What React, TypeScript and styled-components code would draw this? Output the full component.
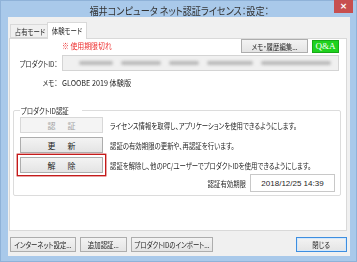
import * as React from "react";
import styled, { createGlobalStyle } from "styled-components";

const GlobalStyle = createGlobalStyle`
	html, body {
		margin: 0;
		padding: 0;
		background: #a9c9ea;
	}
	body {
		font-family: "Noto Sans CJK JP", "Liberation Sans", sans-serif;
		font-feature-settings: "palt";
		color: #1e1e1e;
	}
`;

// Meiryo UI is much narrower than Noto, so text gets squeezed horizontally
const Squeeze = styled.span<{ $s?: number; $o?: string }>`
	display: inline-block;
	white-space: nowrap;
	transform: scaleX(${(p) => p.$s ?? 0.8});
	transform-origin: ${(p) => p.$o ?? "left"} center;
`;

const Frame = styled.div`
	width: 357px;
	height: 262px;
	box-sizing: border-box;
	background: #a9c9ea;
	border: 1px solid #8fb2d8;
	display: flex;
	flex-direction: column;
	padding: 0 6px 5px 7px;
`;

const TitleBar = styled.div`
	height: 16px;
	display: grid;
	grid-template-columns: 19px 1fr 19px;
	align-items: start;
`;

const Title = styled.div`
	grid-column: 2;
	text-align: center;
	font-size: 10.5px;
	line-height: 19px;
	color: #333;
`;

const CloseButton = styled.div`
	width: 19px;
	height: 13px;
	margin-top: -1px;
	margin-left: 3px;
	background: #c74f4f;
	color: #fff;
	font-size: 9px;
	font-weight: bold;
	line-height: 13px;
	text-align: center;
	font-family: "DejaVu Sans", sans-serif;
`;

const Body = styled.div`
	height: 240px;
	background: #f0f0f0;
	display: flex;
	flex-direction: column;
	padding: 5px 3px 4px 1px;
	box-sizing: border-box;
`;

const TabRow = styled.div`
	display: flex;
	align-items: flex-end;
	height: 16px;
	padding-left: 1px;
	position: relative;
	z-index: 1;
`;

const Tab = styled.div<{ $active?: boolean; $w: number }>`
	font-size: 8px;
	box-sizing: border-box;
	width: ${(p) => p.$w}px;
	height: ${(p) => (p.$active ? "17px" : "14px")};
	margin-bottom: ${(p) => (p.$active ? "-1px" : "0")};
	margin-left: ${(p) => (p.$active ? "-1px" : "0")};
	padding-top: ${(p) => (p.$active ? "2px" : "1px")};
	line-height: 11px;
	text-align: center;
	background: ${(p) => (p.$active ? "#fff" : "#f0f0f0")};
	border: 1px solid #d9d9d9;
	border-bottom: ${(p) => (p.$active ? "none" : "1px solid #d9d9d9")};
`;

const Panel = styled.div`
	height: 193px;
	box-sizing: border-box;
	background: #fff;
	border: 1px solid #d9d9d9;
	display: flex;
	flex-direction: column;
	padding: 0 7px 0 0;
`;

const TopRow = styled.div`
	display: flex;
	align-items: flex-start;
	height: 14px;
`;

const Expired = styled.div`
	color: #ee2a2a;
	font-size: 8px;
	line-height: 14px;
	margin-left: 52px;
	flex: 1;
`;

const Button = styled.div<{ $disabled?: boolean; $focus?: boolean; $w: number; $h?: number }>`
	box-sizing: border-box;
	flex: none;
	width: ${(p) => p.$w}px;
	height: ${(p) => p.$h ?? 15}px;
	display: flex;
	align-items: center;
	justify-content: center;
	font-size: 8px;
	color: ${(p) => (p.$disabled ? "#a3a3a3" : "#1e1e1e")};
	background: ${(p) => (p.$disabled ? "#f4f4f4" : "linear-gradient(#f3f3f3, #e4e4e4)")};
	border: 1px solid ${(p) => (p.$focus ? "#3d8ee0" : p.$disabled ? "#d8d8d8" : "#adadad")};
	box-shadow: ${(p) => (p.$focus ? "inset 0 0 0 1px #d4e8fb" : "none")};
	white-space: nowrap;
`;

const SpacedLabel = styled.span`
	letter-spacing: 2px;
	margin-left: 2px;
`;

const QaButton = styled.div`
	box-sizing: border-box;
	width: 27px;
	height: 13px;
	margin: 1px 0 0 4px;
	background: #1fd21f;
	border: 1px solid #17a817;
	color: #fff;
	font-family: "Liberation Serif", serif;
	font-size: 9px;
	line-height: 11px;
	text-align: center;
`;

const FieldRow = styled.div`
	display: flex;
	align-items: center;
	margin-top: 2px;
`;

const Label = styled.div`
	width: 48px;
	text-align: right;
	font-size: 8px;
	white-space: nowrap;
`;

const IdBox = styled.div`
	box-sizing: border-box;
	width: 277px;
	height: 16px;
	margin-left: 4px;
	background: #f0f0f0;
	border: 1px solid #d4d4d4;
	display: flex;
	align-items: center;
	gap: 8px;
	padding-left: 16px;
	overflow: hidden;
`;

const Blur = styled.div<{ $w: number }>`
	width: ${(p) => p.$w}px;
	height: 4px;
	background: #b8b8b8;
	border-radius: 2px;
	filter: blur(1.4px);
`;

const MemoRow = styled.div`
	display: flex;
	align-items: center;
	height: 11px;
	margin-top: 6px;
	font-size: 8px;
`;

const MemoValue = styled.div`
	margin-left: 4px;
`;

const Group = styled.fieldset`
	margin: 18px 0 0 3px;
	padding: 0 0 0 3px;
	min-width: 0;
	width: 328px;
	height: 90px;
	box-sizing: border-box;
	border: 1px solid #dcdcdc;
	border-radius: 2px;
	display: flex;
	flex-direction: column;
`;

const Legend = styled.legend`
	font-size: 8px;
	padding: 0 1px;
	margin-left: 3px;
	line-height: 9px;
`;

const ActionRow = styled.div`
	display: flex;
	align-items: center;
	height: 20px;
	flex: none;
`;

const ButtonSlot = styled.div<{ $marked?: boolean }>`
	box-sizing: border-box;
	flex: none;
	width: 89px;
	height: 22px;
	padding: 2px;
	display: flex;
	align-items: center;
	border: 1px solid ${(p) => (p.$marked ? "#c41a1a" : "transparent")};
	box-shadow: ${(p) => (p.$marked ? "0 0 0 0.4px #c41a1a" : "none")};
`;

const Desc = styled.div`
	font-size: 8px;
	margin-left: 4px;
	white-space: nowrap;
`;

const ExpiryRow = styled.div`
	display: flex;
	align-items: center;
	justify-content: flex-end;
	padding-right: 5px;
	margin-top: -1px;
	font-size: 8px;
`;

const DateBox = styled.div`
	box-sizing: border-box;
	width: 85px;
	height: 18px;
	margin-left: 4px;
	border: 1px solid #c8c8c8;
	background: #fff;
	display: flex;
	align-items: center;
	justify-content: center;
	font-family: "Liberation Sans", sans-serif;
	font-size: 8px;
`;

const Footer = styled.div`
	display: flex;
	align-items: center;
	margin-top: 6px;
	padding-left: 1px;
`;

const FooterButtons = styled.div`
	display: flex;
	gap: 4px;
	flex: 1;
`;

const actions = [
	{ label: "認　証", desc: "ライセンス情報を取得し、アプリケーションを使用できるようにします。", disabled: true },
	{ label: "更　新", desc: "認証の有効期限の更新や、再認証を行います。" },
	{ label: "解　除", desc: "認証を解除し、他のPC/ユーザーでプロダクトIDを使用できるようにします。", marked: true },
];

export default function App() {
	return (
		<>
			<GlobalStyle />
			<Frame>
				<TitleBar>
					<Title>
						<Squeeze $s={0.87} $o="center">福井コンピュータ ネット認証ライセンス：設定：</Squeeze>
					</Title>
					<CloseButton>×</CloseButton>
				</TitleBar>
				<Body>
					<TabRow>
						<Tab $w={38}>
							<Squeeze $o="center">占有モード</Squeeze>
						</Tab>
						<Tab $w={40} $active>
							<Squeeze $o="center">体験モード</Squeeze>
						</Tab>
					</TabRow>
					<Panel>
						<TopRow>
							<Expired>
								<Squeeze $s={0.86}>※ 使用期限切れ</Squeeze>
							</Expired>
							<Button $w={67} $h={14}>
								<Squeeze $o="center">メモ・履歴編集...</Squeeze>
							</Button>
							<QaButton>Q&amp;A</QaButton>
						</TopRow>
						<FieldRow>
							<Label>
								<Squeeze $o="right">プロダクトID：</Squeeze>
							</Label>
							<IdBox>
								<Blur $w={34} />
								<Blur $w={40} />
								<Blur $w={30} />
								<Blur $w={46} />
								<Blur $w={70} />
							</IdBox>
						</FieldRow>
						<MemoRow>
							<Label>
								<Squeeze $o="right">メモ：</Squeeze>
							</Label>
							<MemoValue>
								<Squeeze $s={0.9}>GLOOBE 2019 体験版</Squeeze>
							</MemoValue>
						</MemoRow>
						<Group>
							<Legend>
								<Squeeze>プロダクトID認証</Squeeze>
							</Legend>
							{actions.map((a, i) => (
								<ActionRow key={i}>
									<ButtonSlot $marked={a.marked}>
										<Button $w={83} $h={16} $disabled={a.disabled}>
											<SpacedLabel>{a.label}</SpacedLabel>
										</Button>
									</ButtonSlot>
									<Desc>
										<Squeeze>{a.desc}</Squeeze>
									</Desc>
								</ActionRow>
							))}
							<ExpiryRow>
								<Squeeze $o="right">認証有効期限</Squeeze>
								<DateBox>2018/12/25 14:39</DateBox>
							</ExpiryRow>
						</Group>
					</Panel>
					<Footer>
						<FooterButtons>
							<Button $w={66}>
								<Squeeze $o="center">インターネット設定...</Squeeze>
							</Button>
							<Button $w={47}>
								<Squeeze $o="center">追加認証...</Squeeze>
							</Button>
							<Button $w={82}>
								<Squeeze $o="center">プロダクトIDのインポート...</Squeeze>
							</Button>
						</FooterButtons>
						<Button $w={51} $focus>
							<Squeeze $o="center">閉じる</Squeeze>
						</Button>
					</Footer>
				</Body>
			</Frame>
		</>
	);
}
